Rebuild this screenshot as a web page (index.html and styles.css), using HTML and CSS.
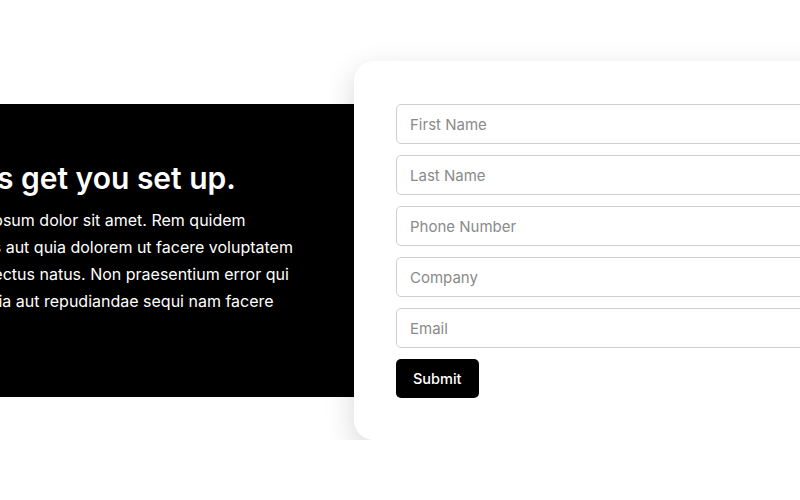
FILE: index.html
```html
<!DOCTYPE html>
<html>
<head>
  <title>Get set up</title>
  <meta name="viewport" content="width=device-width, initial-scale=1.0">
  <link rel="stylesheet" href="styles.css">
</head>
<body>
  <div class="signup">
    <div class="intro">
      <h1>Let's get you set up.</h1>
      <p>Lorem ipsum dolor sit amet. Rem quidem voluptas aut quia dolorem ut facere voluptatem quo delectus natus. Non praesentium error qui qui officia aut repudiandae sequi nam facere</p>
    </div>
    <div class="card">
      <form class="signup-form" onsubmit="return false">
        <input type="text" placeholder="First Name">
        <input type="text" placeholder="Last Name">
        <input type="tel" placeholder="Phone Number">
        <input type="text" placeholder="Company">
        <input type="email" placeholder="Email">
        <div><button type="submit">Submit</button></div>
      </form>
    </div>
  </div>
</body>
</html>
```

FILE: styles.css
```css
body {
  margin: 0;
  font-family: 'Inter', 'Noto Sans', sans-serif;
  background-color: #fff;
  overflow: hidden;
}
.signup {
  display: flex;
  align-items: center;
  margin-left: -111px;
  padding-top: 61px;
}
.intro {
  flex: 0 0 465px;
  box-sizing: border-box;
  height: 293px;
  background-color: #000;
  color: #fff;
  padding: 48px 44px 0 48px;
}
.intro h1 {
  font-size: 30px;
  font-weight: 600;
  padding-left: 5px;
  margin: 8px 0 11px;
}
.intro p {
  font-size: 16px;
  line-height: 27px;
  margin: 0;
}
.card {
  flex: 0 0 560px;
  box-sizing: border-box;
  height: 379px;
  padding: 43px 42px;
  background-color: #fff;
  border-radius: 20px;
  box-shadow: 0 10px 30px rgba(0, 0, 0, 0.16);
}
.signup-form {
  display: flex;
  flex-direction: column;
  gap: 11px;
}
.signup-form input {
  height: 40px;
  box-sizing: border-box;
  border: 1px solid #cfcfcf;
  border-radius: 5px;
  padding: 0 13px;
  font-family: inherit;
  font-size: 15px;
  color: #222;
}
.signup-form input::placeholder {
  color: #8a8a8a;
}
.signup-form button {
  height: 39px;
  padding: 0 17px;
  background-color: #000;
  color: #fff;
  border: none;
  border-radius: 5px;
  font-family: inherit;
  font-size: 14.5px;
  font-weight: 500;
  cursor: pointer;
}
```
